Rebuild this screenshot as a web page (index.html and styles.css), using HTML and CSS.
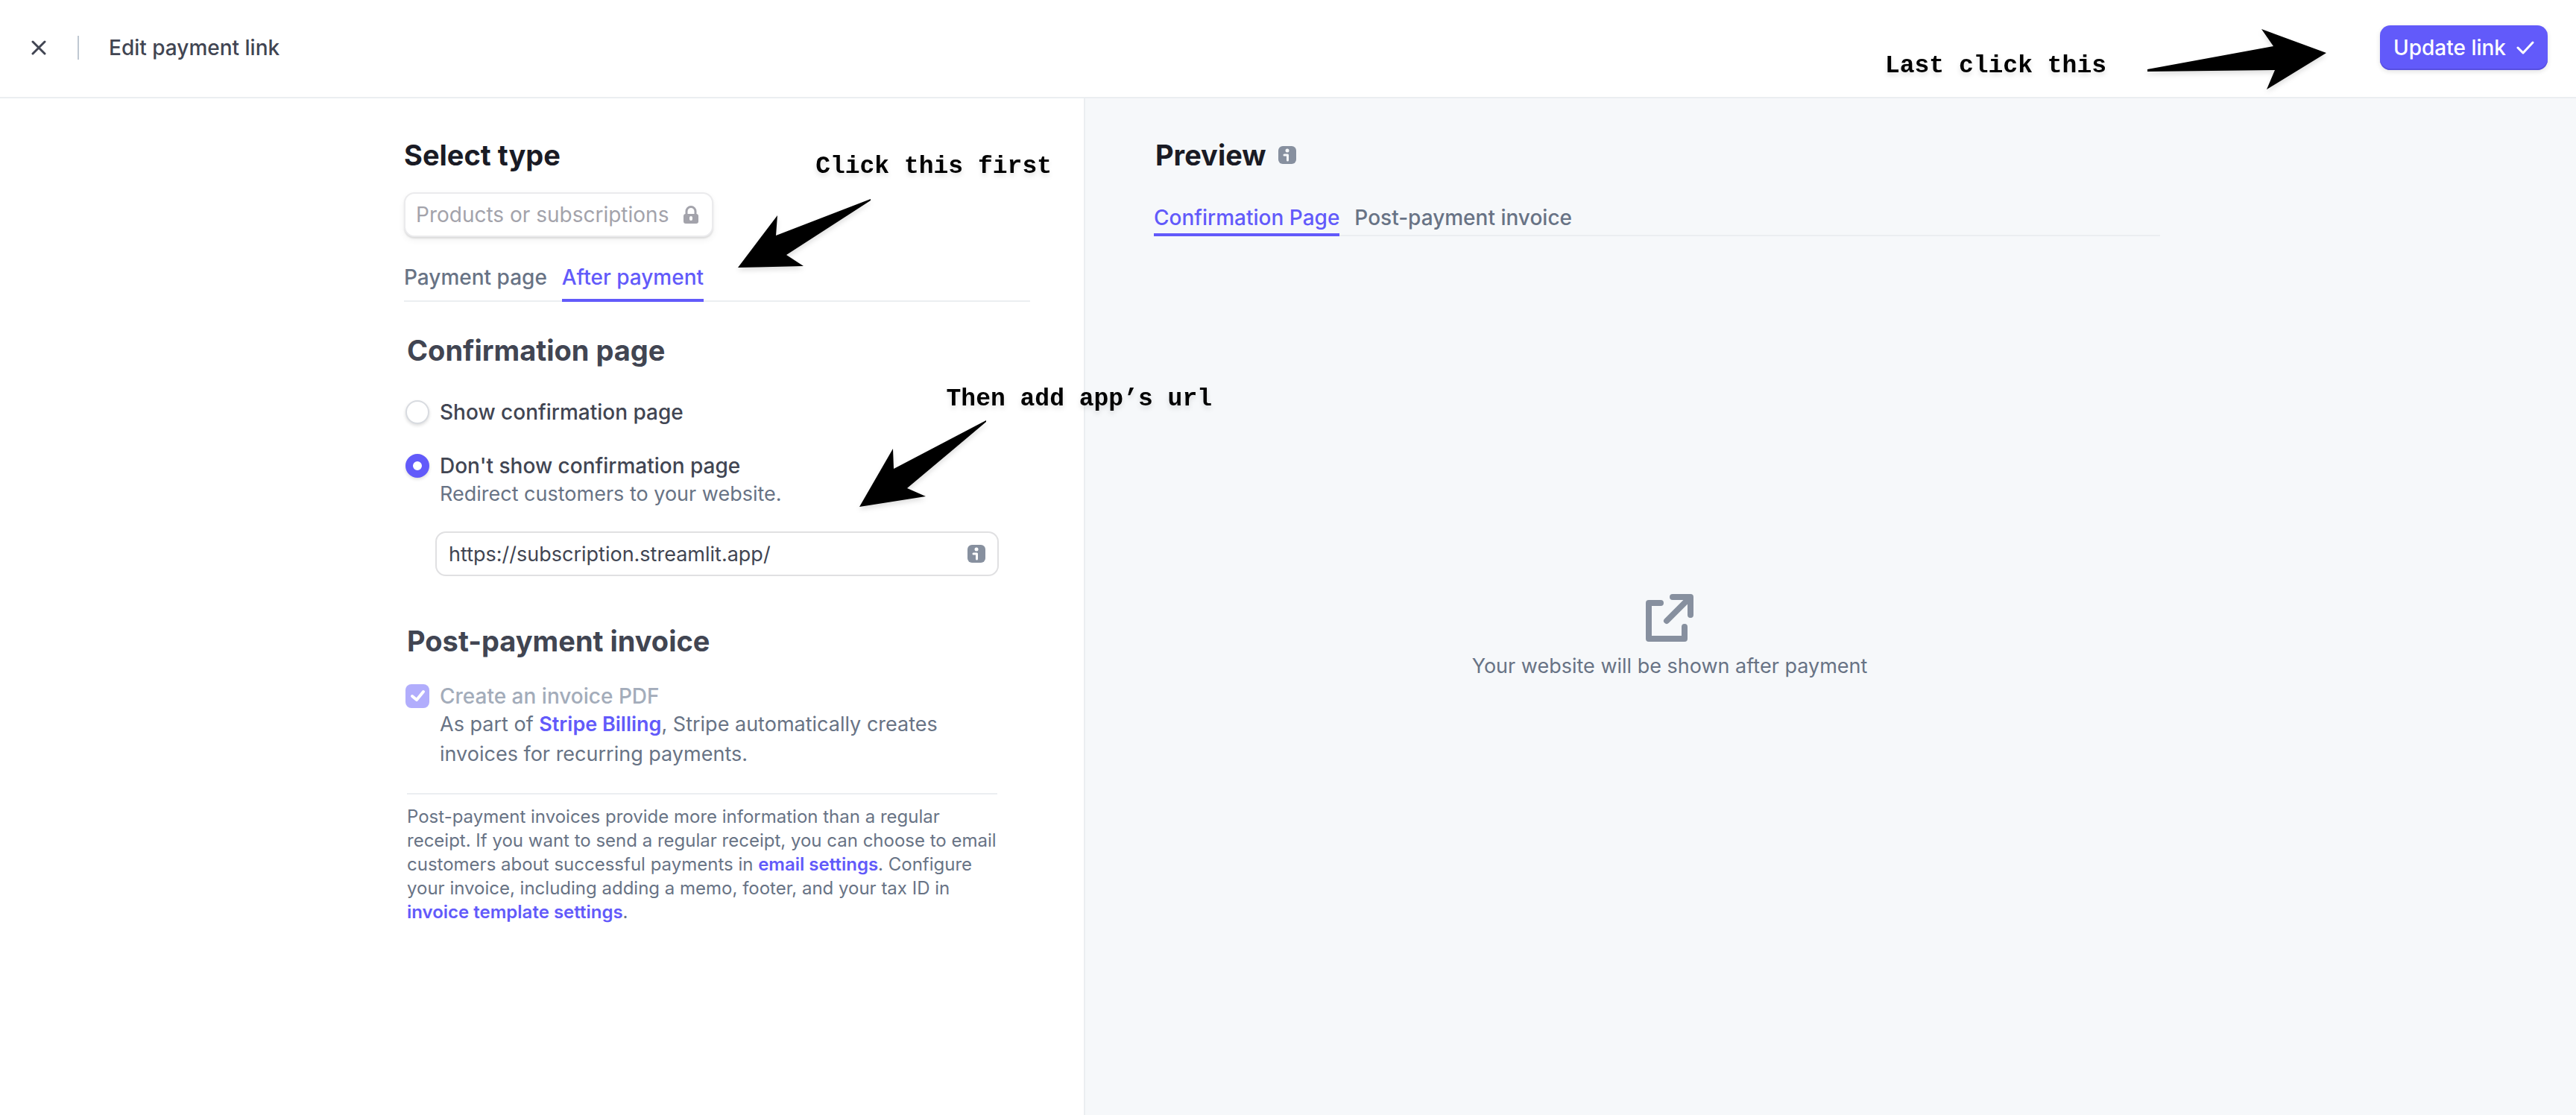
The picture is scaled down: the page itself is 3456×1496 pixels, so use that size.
FILE: index.html
```html
<!DOCTYPE html>
<html lang="en">
<head>
<meta charset="utf-8">
<meta name="viewport" content="width=device-width, initial-scale=1">
<title>Edit payment link</title>
<link rel="stylesheet" href="styles.css">
</head>
<body>
<header class="topbar">
  <button class="close" type="button" aria-label="Close">
    <svg width="20" height="20" viewBox="0 0 20 20"><path d="M2 2l16 16M18 2L2 18" fill="none" stroke="currentColor" stroke-width="3" stroke-linecap="round"/></svg>
  </button>
  <span class="divider"></span>
  <h1 class="topbar-title">Edit payment link</h1>
  <button class="update" type="button">Update link
    <svg width="24" height="18" viewBox="0 0 24 18"><path d="M2 9l7 7L22 2" fill="none" stroke="currentColor" stroke-width="3" stroke-linecap="round" stroke-linejoin="round"/></svg>
  </button>
  <div class="note note-last">
    <span class="note-text">Last click this</span>
    <svg class="arrow" width="240" height="81" viewBox="0 0 240 81"><path d="M0 54L169 23L153 0L240 32L160 81L171 55L0 57z"/></svg>
  </div>
</header>

<main class="panes">
  <section class="editor">
    <div class="editor-body">
      <h2 class="title">Select type</h2>
      <button class="type-select" type="button" disabled>Products or subscriptions
        <svg width="20" height="24" viewBox="0 0 20 24"><path d="M4 12V7.500a6 6 0 0 1 12 0V12" fill="none" stroke="currentColor" stroke-width="3"/><path fill="currentColor" fill-rule="evenodd" d="M3 11h14a3 3 0 0 1 3 3v7a3 3 0 0 1-3 3H3a3 3 0 0 1-3-3v-7a3 3 0 0 1 3-3zm7 3a2 2 0 0 0-2 2v2a2 2 0 0 0 4 0v-2a2 2 0 0 0-2-2z"/></svg>
      </button>
      <nav class="tabs tabs-editor">
        <a class="tab" href="#payment">Payment page</a>
        <a class="tab active" href="#after">After payment</a>
      </nav>

      <form class="settings">
        <h3 class="subtitle">Confirmation page</h3>
        <div class="option">
          <input class="radio" type="radio" name="confirm" id="show">
          <label class="option-label" for="show">Show confirmation page</label>
        </div>
        <div class="option option-second">
          <input class="radio" type="radio" name="confirm" id="hide" checked>
          <div>
            <label class="option-label" for="hide">Don't show confirmation page</label>
            <p class="hint">Redirect customers to your website.</p>
          </div>
        </div>
        <div class="url-field">
          <input class="url" type="text" aria-label="Website URL" value="https://subscription.streamlit.app/">
          <svg class="info" width="24" height="24" viewBox="0 0 24 24"><rect width="24" height="24" rx="6" fill="#87909f"/><circle cx="12" cy="6" r="2.500" fill="#fff"/><path d="M8 12h4.500v7" fill="none" stroke="#fff" stroke-width="3" stroke-linecap="round" stroke-linejoin="round"/></svg>
        </div>

        <h3 class="subtitle subtitle-invoice">Post-payment invoice</h3>
        <div class="option option-invoice">
          <input class="checkbox" type="checkbox" id="pdf" checked disabled>
          <div>
            <label class="option-label muted" for="pdf">Create an invoice PDF</label>
            <p class="hint">As part of <a href="#billing">Stripe Billing</a>, Stripe automatically creates invoices for recurring payments.</p>
          </div>
        </div>
        <p class="footnote">Post-payment invoices provide more information than a regular receipt. If you want to send a regular receipt, you can choose to email customers about successful payments in <a href="#email">email settings</a>. Configure your invoice, including adding a memo, footer, and your tax ID in <a href="#template">invoice template settings</a>.</p>
      </form>
    </div>
    <div class="note note-first">
      <span class="note-text">Click this first</span>
      <svg class="arrow" width="178" height="93" viewBox="0 0 178 93"><path d="M178 0L51 49L53 22L0 92L88 90L65 75L178 2z"/></svg>
    </div>
    <div class="note note-then">
      <span class="note-text">Then add app’s url</span>
      <svg class="arrow" width="170" height="116" viewBox="0 0 170 116"><path d="M170 0L46 65L45 38L0 116L89 102L64 91L170 2z"/></svg>
    </div>
  </section>

  <section class="preview">
    <div class="preview-head">
      <h2 class="title">Preview</h2>
      <svg class="info" width="24" height="24" viewBox="0 0 24 24"><rect width="24" height="24" rx="6" fill="#87909f"/><circle cx="12" cy="6" r="2.500" fill="#f6f8fa"/><path d="M8 12h4.500v7" fill="none" stroke="#f6f8fa" stroke-width="3" stroke-linecap="round" stroke-linejoin="round"/></svg>
    </div>
    <nav class="tabs tabs-preview">
      <a class="tab active" href="#confirmation">Confirmation Page</a>
      <a class="tab" href="#invoice">Post-payment invoice</a>
    </nav>
    <div class="empty">
      <svg width="64" height="64" viewBox="0 0 64 64" fill="none" stroke="#87909f" stroke-width="8" stroke-linecap="round" stroke-linejoin="round"><path d="M20 12H4v48h48V44M36 4h24v24M59 5L28 36"/></svg>
      <p class="empty-text">Your website will be shown after payment</p>
    </div>
  </section>
</main>
</body>
</html>
```
FILE: styles.css
```css
* { box-sizing: border-box; margin: 0; }

body {
  min-height: 100vh;
  display: flex;
  flex-direction: column;
  background: #fff;
  color: #414552;
  font: 400 27px/36px Inter, "Liberation Sans", sans-serif;
}

button, input { font: inherit; color: inherit; }
svg { display: block; flex: none; }
a { color: #625afa; text-decoration: none; font-weight: 600; }

.topbar {
  position: relative;
  display: flex;
  align-items: center;
  height: 132px;
  padding: 0 38px 2px 42px;
  border-bottom: 2px solid #ebeef1;
}
.close { padding: 0; border: 0; background: none; }
.divider { width: 2px; height: 32px; margin: 0 40px 0 42px; background: #c0c8d2; }
.topbar-title { font-size: 28px; font-weight: 500; }
.update {
  display: flex;
  align-items: center;
  gap: 14px;
  height: 60px;
  margin-left: auto;
  padding: 0 18px;
  border: 0;
  border-radius: 14px;
  background: #625afa;
  color: #fff;
  font-size: 28px;
  font-weight: 500;
  box-shadow: inset 0 -2px 0 #584fe0, 0 2px 6px rgba(0, 0, 0, .12);
}

.panes { flex: 1; display: grid; grid-template-columns: 1456fr 2000fr; }

.editor {
  position: relative;
  z-index: 1;
  display: flex;
  justify-content: flex-end;
  padding: 50px 72px 80px 40px;
  border-right: 2px solid #ebeef1;
}
.editor-body { width: 840px; }
.title { color: #1a1b25; font-size: 38px; font-weight: 700; line-height: 52px; }
.type-select {
  display: flex;
  align-items: center;
  gap: 20px;
  height: 60px;
  margin-top: 24px;
  padding: 0 18px 0 14px;
  border: 2px solid #ebebed;
  border-radius: 14px;
  background: #fff;
  color: #a3a3ab;
  font-size: 28px;
  box-shadow: 0 2px 2px rgba(0, 0, 0, .1), 0 4px 10px rgba(0, 0, 0, .06);
}

.tabs { display: flex; gap: 20px; box-shadow: inset 0 -2px 0 #ebeef1; }
.tab { color: #687385; font-size: 28px; font-weight: 500; border-bottom: 4px solid transparent; }
.tab.active { color: #625afa; border-color: #625afa; }
.tabs-editor { margin-top: 36px; }
.tabs-editor .tab { padding-bottom: 11px; }

.settings { padding: 0 44px 0 4px; }
.subtitle { margin-top: 39px; font-size: 38px; font-weight: 700; line-height: 52px; }
.subtitle-invoice { margin-top: 61px; }

.option { display: flex; gap: 14px; margin-top: 39px; }
.option-second { margin-top: 36px; }
.option-invoice { margin-top: 30px; }
.option-label { display: block; font-size: 28px; font-weight: 500; }
.muted { color: #a3acba; }
.radio, .checkbox { appearance: none; flex: none; width: 32px; height: 32px; margin: 2px 0 0 -2px; background: #fff; }
.radio {
  border: 2px solid #d8dbe0;
  border-radius: 50%;
  box-shadow: 0 2px 4px rgba(0, 0, 0, .14);
}
.radio:checked { border: 10px solid #625afa; }
.checkbox {
  border-radius: 8px;
  background: #b1adfc url("data:image/svg+xml,%3Csvg xmlns='http://www.w3.org/2000/svg' viewBox='0 0 32 32'%3E%3Cpath d='M9 16l6 5 9-11' fill='none' stroke='white' stroke-width='4' stroke-linecap='round' stroke-linejoin='round'/%3E%3C/svg%3E");
}
.hint { color: #687385; line-height: 40px; }

.url-field { display: flex; position: relative; align-items: center; margin: 30px -2px 0 38px; }
.url {
  width: 100%;
  height: 60px;
  padding: 0 64px 0 16px;
  border: 2px solid #e0e0e2;
  border-radius: 14px;
  background: #fff;
}
.url-field .info { position: absolute; right: 18px; }

.footnote {
  margin-top: 32px;
  padding-top: 14px;
  border-top: 2px solid #ebeef1;
  color: #687385;
  font-size: 24px;
  line-height: 32px;
}

.preview { padding: 50px 558px 80px 92px; background: #f6f8fa; }
.preview-head { display: flex; align-items: center; gap: 16px; padding-left: 2px; }
.tabs-preview { margin-top: 40px; }
.tabs-preview .tab { padding-bottom: 3px; }
.empty { display: flex; flex-direction: column; align-items: center; gap: 15px; margin-top: 480px; padding-left: 34px; }
.empty-text { color: #687385; text-align: center; }

.note { position: absolute; pointer-events: none; color: #000; filter: drop-shadow(0 4px 3px rgba(0, 0, 0, .12)); }
.note-text { font: 700 33px/40px "Liberation Mono", monospace; white-space: nowrap; }
.note-last { display: flex; gap: 55px; right: 335px; top: 39px; }
.note-last .note-text { padding-top: 30px; }
.note-first { right: 43px; top: 72px; }
.note-first .arrow { margin: 23px 0 0 -104px; }
.note-then { right: -172px; top: 384px; }
.note-then .arrow { margin: 8px 0 0 -117px; }
```
